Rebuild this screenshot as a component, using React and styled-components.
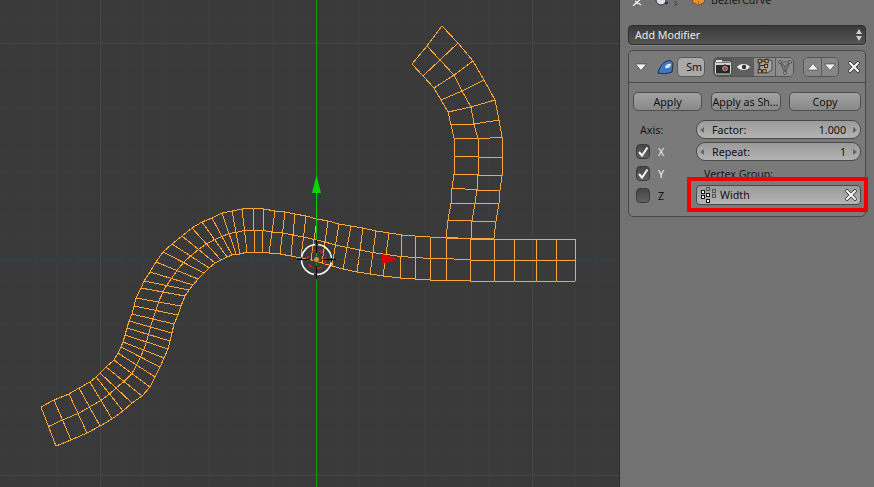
import React from 'react'
import styled, { createGlobalStyle } from 'styled-components'

const GlobalStyle = createGlobalStyle`
  html, body { margin: 0; padding: 0; height: 100%; overflow: hidden; }
  body { font-family: "Noto Sans", "Open Sans", sans-serif; font-size: 10.7px; background: #3a3a3a; }
`

const Page = styled.div`
  display: flex;
  width: 874px;
  height: 487px;
  overflow: hidden;
`
const Viewport = styled.div`
  width: 619px;
  height: 487px;
  flex: none;
  background: #3a3a3a;
  svg { display: block; }
`
const Panel = styled.div`
  flex: 1;
  display: flex;
  flex-direction: column;
  background: #727272;
  border-left: 1px solid #2b2b2b;
  padding: 0 8px 0 8px;
`
const ContextStrip = styled.div`
  height: 6px;
  overflow: hidden;
  display: flex;
  align-items: flex-end;
  margin-bottom: 19px;
  padding-left: 4px;
  color: #1c1c1c;
  line-height: 14px;
  span { margin-left: 6px; transform: translateY(1px); }
  svg { flex: none; }
`
const AddModifier = styled.div`
  height: 20px;
  box-sizing: border-box;
  display: flex;
  align-items: center;
  justify-content: space-between;
  padding: 0 2px 0 6px;
  border: 1px solid #2e2e2e;
  border-radius: 4px;
  background: linear-gradient(#393939, #555);
  color: #e8e8e8;
  box-shadow: 0 1px 0 #858585;
`
const ModifierBox = styled.div`
  margin-top: 5px;
  height: 167px;
  box-sizing: border-box;
  border: 1px solid #484848;
  border-radius: 5px;
  background: #7a7a7a;
`
const ModifierHeader = styled.div`
  height: 32px;
  box-sizing: border-box;
  display: flex;
  align-items: center;
  border-bottom: 1px solid #4a4a4a;
  padding-left: 6px;
`
const NameField = styled.div`
  width: 28px;
  height: 20px;
  box-sizing: border-box;
  margin-left: 2px;
  border: 1px solid #5a5a5a;
  border-radius: 5px;
  background: #a9a9a9;
  color: #111;
  display: flex;
  align-items: center;
  justify-content: flex-end;
  padding-right: 2px;
  overflow: hidden;
`
const ToggleGroup = styled.div`
  display: flex;
  flex: none;
  height: 20px;
  box-sizing: border-box;
  margin-left: ${p => p.$gap}px;
  border: 1px solid #555;
  border-radius: 5px;
  overflow: hidden;
`
const Toggle = styled.div`
  width: ${p => p.$w}px;
  box-sizing: border-box;
  display: flex;
  align-items: center;
  justify-content: center;
  background: ${p => p.$bg};
  & + & { border-left: 1px solid #5c5c5c; }
  svg { flex: none; }
`
const CloseSlot = styled.div`
  margin-left: 8px;
  height: 14px;
`
const Body = styled.div`
  padding: 9px 4px 0 4px;
`
const ButtonRow = styled.div`
  display: flex;
  justify-content: space-between;
`
const ActionButton = styled.div`
  width: ${p => p.$w}px;
  height: 19px;
  box-sizing: border-box;
  border: 1px solid #4e4e4e;
  border-radius: 5px;
  background: linear-gradient(#a2a2a2, #888);
  color: #111;
  display: flex;
  align-items: center;
  justify-content: center;
  white-space: nowrap;
  overflow: hidden;
`
const Columns = styled.div`
  display: grid;
  grid-template-columns: 63px 165px;
  margin-top: 9px;
`
const AxisColumn = styled.div`
  display: flex;
  flex-direction: column;
  padding-left: 3px;
`
const AxisLabel = styled.div`
  color: #151515;
  height: 15px;
  line-height: 15px;
  margin: 3px 0 6px 4px;
`
const CheckRow = styled.div`
  display: flex;
  align-items: center;
  height: 15px;
  margin-bottom: 7px;
  color: ${p => (p.$on ? '#f0f0f0' : '#151515')};
`
const CheckBox = styled.div`
  width: 14px;
  height: 15px;
  box-sizing: border-box;
  margin-right: 8px;
  border: 1px solid #3a3a3a;
  border-radius: 4px;
  background: linear-gradient(#464646, #606060);
  display: flex;
  align-items: center;
  justify-content: center;
`
const FieldColumn = styled.div`
  display: flex;
  flex-direction: column;
`
const NumberField = styled.div`
  height: 19px;
  box-sizing: border-box;
  margin-bottom: 3px;
  border: 1px solid #4a4a4a;
  border-radius: 9px;
  background: linear-gradient(#9a9a9a, #b4b4b4);
  color: #111;
  display: flex;
  align-items: center;
  justify-content: space-between;
  padding: 0 3px;
  b { font-weight: 400; flex: 1; margin-left: 8px; }
  em { font-style: normal; margin-right: 7px; }
`
const Arrow = styled.i`
  width: 0;
  height: 0;
  border-top: 3px solid transparent;
  border-bottom: 3px solid transparent;
  ${p => (p.$right ? 'border-left: 4px solid #666;' : 'border-right: 4px solid #666;')}
`
const FieldLabel = styled.div`
  height: 21px;
  line-height: 21px;
  color: #151515;
  padding-left: 8px;
`
const GroupField = styled.div`
  position: relative;
  height: 20px;
  box-sizing: border-box;
  border: 1px solid #4a4a4a;
  border-radius: 4px;
  background: linear-gradient(#9a9a9a, #b4b4b4);
  color: #111;
  display: flex;
  align-items: center;
  padding: 0 2px 0 4px;
  span { flex: 1; margin-left: 4px; }
`
const Highlight = styled.div`
  position: absolute;
  top: -9px;
  bottom: -8px;
  left: -10px;
  right: -8px;
  border: 4px solid #f00000;
`

// mesh rungs read off the screenshot: top x, y, bottom x, y
const RUNGS = [
  [41,407,56,446],[54,400,71,440],[69,394,87,433],[79,388,100,426],[90,382,112,419],
  [96,377,123,411],[100,373,132,403],[106,367,142,396],[114,360,150,387],[118,353,155,377],
  [121,347,160,367],[123,342,164,358],[125,335,168,349],[127,328,170,341],[129,321,172,333],
  [132,314,174,324],[134,306,178,315],[136,298,181,306],[141,288,185,296],[144,281,189,290],
  [150,272,193,285],[156,262,198,279],[163,252,204,273],[172,244,209,268],[182,236,215,263],
  [192,228,221,260],[202,222,227,257],[212,218,232,255],[222,213,236,254],[232,211,240,254],
  [242,209,247,252],[253,208,255,252],[264,209,262,252],[275,211,269,253],[285,212,280,254],
  [295,214,291,256],[306,216,301,258],[317,219,311,260],[328,221,322,263],[339,224,332,266],
  [351,226,343,269],[363,228,357,272],[376,231,370,274],[389,233,383,276],[402,235,400,278],
  [415,236,415,279],[430,237,430,280],[446,237,446,280],[470,239,470,281],[494,239,494,281],
  [514,239,514,281],[536,239,536,281],[556,239,556,281],[575,239,575,281],
]
const TOP = RUNGS.map(r => [r[0], r[1]])
const BOTTOM = RUNGS.map(r => [r[2], r[3]])
const MIDDLE = RUNGS.map(r => [(r[0] + r[2]) / 2, (r[1] + r[3]) / 2])

const BRANCH_L = [[412,64],[423,76],[434,88],[441,100],[448,112],[451,125],[454,138],[454,156],[454,174],[452,188],[451,203],[448,220],[446,238]]
const BRANCH_M = [[427,46],[440,60],[454,75],[462,91],[471,107],[474,124],[478,139],[479,157],[478,175],[477,190],[475,203],[472,221],[471,238]]
const BRANCH_R = [[442,26],[458,43],[473,61],[484,80],[495,100],[499,120],[502,137],[502,157],[502,176],[500,190],[499,203],[496,221],[494,238]]

const pts = rail => rail.map(p => p.join(',')).join(' ')

function Mesh({ rails }) {
  return (
    <g fill="none" stroke="#ffa535" strokeWidth="1" shapeRendering="crispEdges">
      {rails.map((r, i) => <polyline key={i} points={pts(r)} />)}
      {rails[0].map((_, i) => (
        <polyline key={i} points={pts(rails.map(r => r[i]))} />
      ))}
    </g>
  )
}

function Grid() {
  const xs = Array.from({ length: 29 }, (_, i) => 100 - 21.6 * 4 + 21.6 * i)
  const ys = Array.from({ length: 23 }, (_, i) => 43 - 21.6 * 2 + 21.6 * i)
  return (
    <g shapeRendering="crispEdges">
      {xs.map((x, i) => <line key={i} x1={x} x2={x} y1="0" y2="487" stroke="#3c3c3c" />)}
      {ys.map((y, i) => <line key={i} y1={y} y2={y} x1="0" x2="619" stroke="#3c3c3c" />)}
      <line x1="100.5" x2="100.5" y1="0" y2="487" stroke="#454545" />
      <line x1="532.5" x2="532.5" y1="0" y2="487" stroke="#454545" />
      <line y1="43.5" y2="43.5" x1="0" x2="619" stroke="#454545" />
      <line y1="475.5" y2="475.5" x1="0" x2="619" stroke="#454545" />
    </g>
  )
}

function Scene() {
  return (
    <svg width="619" height="487" viewBox="0 0 619 487">
      <Grid />
      <line x1="0" x2="619" y1="259.5" y2="259.5" stroke="#7c2222" shapeRendering="crispEdges" />
      <line x1="316.5" x2="316.5" y1="0" y2="487" stroke="#0f9a0f" shapeRendering="crispEdges" />
      <Mesh rails={[TOP, MIDDLE, BOTTOM]} />
      <Mesh rails={[BRANCH_L, BRANCH_M, BRANCH_R]} />
      {/* transform widget */}
      <line x1="316.5" x2="316.5" y1="190" y2="259" stroke="#00d000" strokeWidth="1" shapeRendering="crispEdges" />
      <polygon points="316.5,175 321,193 312,193" fill="#00d800" />
      <line x1="320" x2="384" y1="259.5" y2="259.5" stroke="#d80000" shapeRendering="crispEdges" />
      <polygon points="382,254 398,259 382,264" fill="#dc0000" />
      {/* 3d cursor */}
      <circle cx="316.5" cy="259.5" r="15" fill="none" stroke="#fff" strokeWidth="1.5" />
      <circle cx="316.5" cy="259.5" r="15" fill="none" stroke="#111" strokeWidth="1.5" strokeDasharray="3 20" />
      <circle cx="316.5" cy="259.5" r="9" fill="none" stroke="#e02020" strokeWidth="1.5" strokeDasharray="5 4" />
      <g stroke="#000" strokeWidth="1.5" shapeRendering="crispEdges">
        <line x1="297" x2="310" y1="259.5" y2="259.5" />
        <line x1="323" x2="336" y1="259.5" y2="259.5" />
        <line x1="316.5" x2="316.5" y1="240" y2="253" />
        <line x1="316.5" x2="316.5" y1="266" y2="279" />
      </g>
      <circle cx="316.5" cy="259.5" r="3" fill="#c8964e" stroke="#3a3a3a" />
    </svg>
  )
}

const Triangle = ({ up }) => (
  <svg width="12" height="8" viewBox="0 0 12 8">
    <polygon points={up ? '6,0.5 11.5,7 0.5,7' : '0.5,1 11.5,1 6,7.5'} fill="#f2f2f2" stroke="#333" strokeWidth="0.6" />
  </svg>
)

const CrossIcon = () => (
  <svg width="14" height="14" viewBox="0 0 14 14">
    <path d="M3 3l8 8M11 3l-8 8" stroke="#333" strokeWidth="3.6" strokeLinecap="round" />
    <path d="M3 3l8 8M11 3l-8 8" stroke="#fff" strokeWidth="2" strokeLinecap="round" />
  </svg>
)

const SmoothIcon = () => (
  <svg width="18" height="16" viewBox="0 0 18 16" style={{ marginLeft: 10 }}>
    <path d="M1 14 C2 9 5 4 10 2 C13 1 16 2 16 5 L15 13 C10 15 5 15 1 14Z" fill="#3f78c0" stroke="#1b2f4a" />
    <path d="M8 9 C8 6 11 4 14 5 C14 8 11 10 8 9Z" fill="#d8e6f6" />
  </svg>
)

const CameraIcon = () => (
  <svg width="16" height="16" viewBox="0 0 16 16">
    <rect x="0.5" y="3" width="15" height="12" rx="1" fill="#2a2a2a" stroke="#e8e8e8" strokeWidth="0.9" />
    <rect x="1" y="1" width="6" height="2" fill="#e4e4e4" />
    <rect x="1" y="4" width="14" height="2" fill="#d0d0d0" />
    <circle cx="10" cy="9.5" r="3.6" fill="#8a8a8a" stroke="#111" />
    <circle cx="10" cy="9.5" r="1.5" fill="#c03030" />
  </svg>
)

const EyeIcon = () => (
  <svg width="15" height="10" viewBox="0 0 15 10">
    <path d="M1 5 C4 1 11 1 14 5 C11 9 4 9 1 5Z" fill="#eee" />
    <circle cx="8" cy="5" r="2.2" fill="#333" />
  </svg>
)

const EditIcon = () => (
  <svg width="17" height="17" viewBox="0 0 16 16">
    <path d="M5 2 L11 1 L15 3 L15 11 L11 14 L5 13" fill="#a8a8a8" stroke="#555" />
    <path d="M4 3 H10 M3 3 V12 M4 7 H9 M4 12 H7" stroke="#222" fill="none" />
    <g fill="#f0a030" stroke="#222" strokeWidth="0.8">
      <rect x="2" y="1.5" width="3" height="3" /><rect x="8.5" y="1.5" width="3" height="3" />
      <rect x="8" y="6" width="3" height="3" /><rect x="2" y="11" width="3" height="3" />
      <rect x="6.5" y="11" width="3" height="3" />
    </g>
  </svg>
)

const CageIcon = () => (
  <svg width="16" height="16" viewBox="0 0 16 16" fill="none" stroke="#5d5d5d">
    <path d="M3 3 H13 L8 14 Z M3 3 L8 8 L13 3 M8 8 V14" strokeWidth="1.2" />
    <g fill="#a8a8a8" stroke="#444" strokeWidth="0.8">
      <circle cx="3" cy="3" r="1.5" /><circle cx="13" cy="3" r="1.5" /><circle cx="8" cy="14" r="1.5" />
    </g>
  </svg>
)

const CheckMark = () => (
  <svg width="12" height="12" viewBox="0 0 12 12">
    <path d="M2 6 L5 9.5 L10.5 1.5" fill="none" stroke="#f4f4f4" strokeWidth="2" />
  </svg>
)

const VertexGroupIcon = () => (
  <svg width="15" height="16" viewBox="0 0 15 16" shapeRendering="crispEdges">
    <g fill="none" stroke="#555">
      <rect x="5.5" y="0.5" width="3" height="3" /><rect x="11.5" y="2.5" width="3" height="3" />
      <rect x="11.5" y="7.5" width="3" height="3" />
    </g>
    <g fill="#fff" stroke="#111">
      <rect x="0.5" y="3.5" width="3" height="3" /><rect x="0.5" y="8.5" width="3" height="3" />
      <rect x="5.5" y="6.5" width="3" height="3" /><rect x="5.5" y="12.5" width="3" height="3" />
    </g>
  </svg>
)

const ContextIcons = () => (
  <>
    <svg width="10" height="6" viewBox="0 2 10 6"><path d="M1 8 L5 4 L8 2 M3 3 L9 7" stroke="#eee" strokeWidth="1.4" fill="none" /></svg>
    <svg width="14" height="6" viewBox="0 2 14 6" style={{ marginLeft: 13 }}>
      <circle cx="6" cy="2" r="5" fill="#d5deea" stroke="#333" />
      <circle cx="11.5" cy="5" r="1.6" fill="#333" />
    </svg>
    <svg width="4" height="5" viewBox="0 0 4 5" style={{ marginLeft: 5 }}><path d="M0.5 0 L3 2.5 L0.5 5" stroke="#333" fill="none" /></svg>
    <svg width="13" height="6" viewBox="0 2 13 6" style={{ marginLeft: 14 }}>
      <path d="M0.5 0 H12.5 V4 L6.5 7.5 L0.5 4Z" fill="#e8902e" stroke="#6a3c10" strokeWidth="0.7" />
      <path d="M6.5 3 V7.5" stroke="#a8601a" />
    </svg>
  </>
)

export default function App() {
  return (
    <>
      <GlobalStyle />
      <Page>
        <Viewport>
          <Scene />
        </Viewport>
        <Panel>
          <ContextStrip>
            <ContextIcons />
            <span>BezierCurve</span>
          </ContextStrip>
          <AddModifier>
            Add Modifier
            <svg width="8" height="14" viewBox="0 0 8 14">
              <path d="M4 1 L7 6 H1Z M4 13 L7 8 H1Z" fill="#cfcfcf" />
            </svg>
          </AddModifier>
          <ModifierBox>
            <ModifierHeader>
              <Triangle />
              <SmoothIcon />
              <NameField>Sm</NameField>
              <ToggleGroup $gap={8}>
                <Toggle $w={18} $bg="#555"><CameraIcon /></Toggle>
                <Toggle $w={21} $bg="#5f5f5f"><EyeIcon /></Toggle>
                <Toggle $w={22} $bg="#8c8c8c"><EditIcon /></Toggle>
                <Toggle $w={18} $bg="#8c8c8c"><CageIcon /></Toggle>
              </ToggleGroup>
              <ToggleGroup $gap={9}>
                <Toggle $w={17} $bg="#868686"><Triangle up /></Toggle>
                <Toggle $w={17} $bg="#868686"><Triangle /></Toggle>
              </ToggleGroup>
              <CloseSlot><CrossIcon /></CloseSlot>
            </ModifierHeader>
            <Body>
              <ButtonRow>
                <ActionButton $w={69}>Apply</ActionButton>
                <ActionButton $w={70}>Apply as Sh...</ActionButton>
                <ActionButton $w={72}>Copy</ActionButton>
              </ButtonRow>
              <Columns>
                <AxisColumn>
                  <AxisLabel>Axis:</AxisLabel>
                  <CheckRow $on><CheckBox><CheckMark /></CheckBox>X</CheckRow>
                  <CheckRow $on><CheckBox><CheckMark /></CheckBox>Y</CheckRow>
                  <CheckRow><CheckBox />Z</CheckRow>
                </AxisColumn>
                <FieldColumn>
                  <NumberField><Arrow /><b>Factor:</b><em>1.000</em><Arrow $right /></NumberField>
                  <NumberField><Arrow /><b>Repeat:</b><em>1</em><Arrow $right /></NumberField>
                  <FieldLabel>Vertex Group:</FieldLabel>
                  <GroupField>
                    <VertexGroupIcon />
                    <span>Width</span>
                    <CrossIcon />
                    <Highlight />
                  </GroupField>
                </FieldColumn>
              </Columns>
            </Body>
          </ModifierBox>
        </Panel>
      </Page>
    </>
  )
}
